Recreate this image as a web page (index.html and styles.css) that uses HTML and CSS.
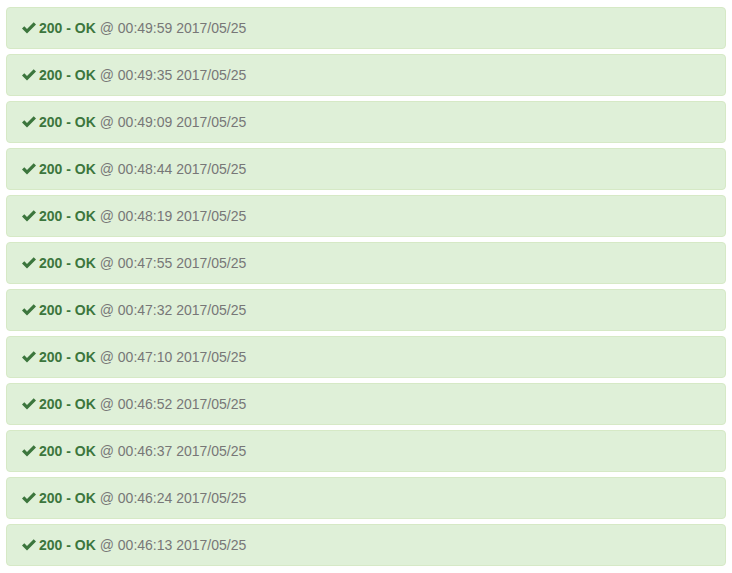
FILE: index.html
```html
<!DOCTYPE html>
<html>
<head>
<meta charset="utf-8">
<link rel="stylesheet" href="styles.css">
</head>
<body>
<div class="list">
  <div class="alert"><svg class="ok" viewBox="0 0 14 12" width="14" height="12"><polygon points="0,6.6 2.3,4.3 5,7 11.7,0.3 14,2.6 5,11.6"/></svg><strong>200 - OK</strong> <span class="time">@ 00:49:59 2017/05/25</span></div>
  <div class="alert"><svg class="ok" viewBox="0 0 14 12" width="14" height="12"><polygon points="0,6.6 2.3,4.3 5,7 11.7,0.3 14,2.6 5,11.6"/></svg><strong>200 - OK</strong> <span class="time">@ 00:49:35 2017/05/25</span></div>
  <div class="alert"><svg class="ok" viewBox="0 0 14 12" width="14" height="12"><polygon points="0,6.6 2.3,4.3 5,7 11.7,0.3 14,2.6 5,11.6"/></svg><strong>200 - OK</strong> <span class="time">@ 00:49:09 2017/05/25</span></div>
  <div class="alert"><svg class="ok" viewBox="0 0 14 12" width="14" height="12"><polygon points="0,6.6 2.3,4.3 5,7 11.7,0.3 14,2.6 5,11.6"/></svg><strong>200 - OK</strong> <span class="time">@ 00:48:44 2017/05/25</span></div>
  <div class="alert"><svg class="ok" viewBox="0 0 14 12" width="14" height="12"><polygon points="0,6.6 2.3,4.3 5,7 11.7,0.3 14,2.6 5,11.6"/></svg><strong>200 - OK</strong> <span class="time">@ 00:48:19 2017/05/25</span></div>
  <div class="alert"><svg class="ok" viewBox="0 0 14 12" width="14" height="12"><polygon points="0,6.6 2.3,4.3 5,7 11.7,0.3 14,2.6 5,11.6"/></svg><strong>200 - OK</strong> <span class="time">@ 00:47:55 2017/05/25</span></div>
  <div class="alert"><svg class="ok" viewBox="0 0 14 12" width="14" height="12"><polygon points="0,6.6 2.3,4.3 5,7 11.7,0.3 14,2.6 5,11.6"/></svg><strong>200 - OK</strong> <span class="time">@ 00:47:32 2017/05/25</span></div>
  <div class="alert"><svg class="ok" viewBox="0 0 14 12" width="14" height="12"><polygon points="0,6.6 2.3,4.3 5,7 11.7,0.3 14,2.6 5,11.6"/></svg><strong>200 - OK</strong> <span class="time">@ 00:47:10 2017/05/25</span></div>
  <div class="alert"><svg class="ok" viewBox="0 0 14 12" width="14" height="12"><polygon points="0,6.6 2.3,4.3 5,7 11.7,0.3 14,2.6 5,11.6"/></svg><strong>200 - OK</strong> <span class="time">@ 00:46:52 2017/05/25</span></div>
  <div class="alert"><svg class="ok" viewBox="0 0 14 12" width="14" height="12"><polygon points="0,6.6 2.3,4.3 5,7 11.7,0.3 14,2.6 5,11.6"/></svg><strong>200 - OK</strong> <span class="time">@ 00:46:37 2017/05/25</span></div>
  <div class="alert"><svg class="ok" viewBox="0 0 14 12" width="14" height="12"><polygon points="0,6.6 2.3,4.3 5,7 11.7,0.3 14,2.6 5,11.6"/></svg><strong>200 - OK</strong> <span class="time">@ 00:46:24 2017/05/25</span></div>
  <div class="alert"><svg class="ok" viewBox="0 0 14 12" width="14" height="12"><polygon points="0,6.6 2.3,4.3 5,7 11.7,0.3 14,2.6 5,11.6"/></svg><strong>200 - OK</strong> <span class="time">@ 00:46:13 2017/05/25</span></div>
</div>
</body>
</html>
```
FILE: styles.css
```css
html, body {
  margin: 0;
  background: #fff;
}
body {
  font-family: "Liberation Sans", Arial, sans-serif;
  font-size: 14px;
  line-height: 20px;
  color: #333;
}
.list {
  padding: 7px 6px 0 6px;
  display: flex;
  flex-direction: column;
  gap: 5px;
}
.alert {
  background: #dff0d8;
  border: 1px solid #d6e9c6;
  border-radius: 4px;
  padding: 10px 15px;
  color: #3c763d;
  white-space: nowrap;
}
.ok {
  fill: #3c763d;
  vertical-align: -1px;
  margin-right: 3px;
}
.alert strong {
  font-weight: bold;
}
.time {
  color: #777;
}
```
